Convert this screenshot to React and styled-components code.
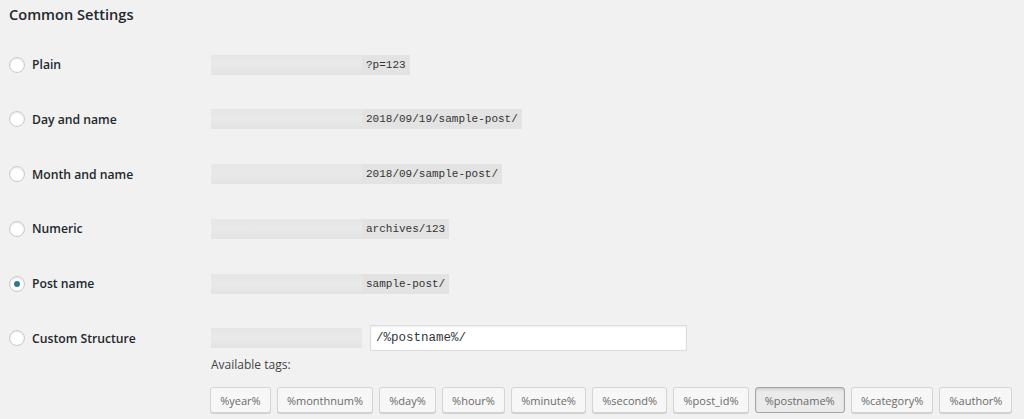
import styled, { createGlobalStyle } from 'styled-components';

const GlobalStyle = createGlobalStyle`
  html, body {
    margin: 0;
    padding: 0;
    background: #f1f1f1;
  }
  body {
    font-family: 'Open Sans', 'Liberation Sans', sans-serif;
    color: #23282d;
  }
`;

const Page = styled.div`
  width: 1024px;
  height: 419px;
  overflow: hidden;
  padding-left: 9px;
  box-sizing: border-box;
`;

const Heading = styled.h2`
  margin: 4px 0 0;
  font-size: 14.6px;
  line-height: 20px;
  font-weight: 600;
  color: #23282d;
`;

const Rows = styled.div`
  margin-top: 13.2px;
`;

const Row = styled.div`
  display: grid;
  grid-template-columns: 202px 1fr;
  padding: 14.4px 0;
`;

const LabelCell = styled.label`
  display: flex;
  align-items: center;
  gap: 7px;
  height: 26px;
  font-size: 12.2px;
  font-weight: 600;
  color: #23282d;
`;

const Radio = styled.span`
  width: 14px;
  height: 14px;
  border-radius: 50%;
  border: 1px solid #c7cacd;
  background: #fff;
  box-shadow: inset 0 1px 2px rgba(0, 0, 0, 0.1);
  display: flex;
  align-items: center;
  justify-content: center;
  flex: none;

  &::after {
    content: '';
    width: 6px;
    height: 6px;
    border-radius: 50%;
    background: ${({ checked }) => (checked ? '#2c7a92' : 'transparent')};
  }
`;

const Field = styled.div`
  display: flex;
  flex-direction: column;
`;

const Line = styled.div`
  display: flex;
  align-items: center;
  gap: 8px;
  height: 26px;
`;

const Code = styled.code`
  display: flex;
  align-items: center;
  height: 20px;
  background: #e3e3e3;
  font-family: 'Liberation Mono', 'DejaVu Sans Mono', monospace;
  font-size: 11px;
  color: #333;
  padding-right: ${({ bare }) => (bare ? '0' : '4px')};
`;

const Blur = styled.span`
  width: 151px;
  height: 20px;
  margin-right: ${({ bare }) => (bare ? '0' : '4px')};
  background: linear-gradient(180deg, #e6e6e6 0%, #e9e9e9 50%, #e3e3e3 100%);
`;

const Input = styled.input`
  width: 317px;
  height: 26px;
  box-sizing: border-box;
  border: 1px solid #ddd;
  box-shadow: inset 0 1px 2px rgba(0, 0, 0, 0.07);
  background: #fff;
  padding: 0 5px;
  font-family: 'Liberation Mono', 'DejaVu Sans Mono', monospace;
  font-size: 12.5px;
  color: #32373c;
  outline: none;
`;

const TagsLabel = styled.div`
  margin-top: 4px;
  font-size: 12px;
  line-height: 20px;
  color: #444;
`;

const Tags = styled.div`
  display: flex;
  gap: 6px;
  margin-top: 12px;
  margin-left: -1px;
`;

const Tag = styled.button`
  margin: 0;
  height: 26px;
  padding: 0 9.15px;
  border-radius: 3px;
  border: 1px solid ${({ active }) => (active ? '#a5a5a5' : '#d4d4d4')};
  background: ${({ active }) => (active ? '#ebebeb' : '#f7f7f7')};
  box-shadow: ${({ active }) =>
    active ? 'inset 0 2px 5px -3px rgba(0,0,0,0.4)' : '0 1px 0 #d0d0d0'};
  font-family: 'Open Sans', 'Liberation Sans', sans-serif;
  font-size: 11px;
  color: #6a6a6a;
  cursor: pointer;
`;

const options = [
  { label: 'Plain', sample: '?p=123' },
  { label: 'Day and name', sample: '2018/09/19/sample-post/' },
  { label: 'Month and name', sample: '2018/09/sample-post/' },
  { label: 'Numeric', sample: 'archives/123' },
  { label: 'Post name', sample: 'sample-post/', checked: true },
];

const tags = [
  '%year%',
  '%monthnum%',
  '%day%',
  '%hour%',
  '%minute%',
  '%second%',
  '%post_id%',
  '%postname%',
  '%category%',
  '%author%',
];

const App = () => {
  return (
    <>
      <GlobalStyle />
      <Page>
        <Heading>Common Settings</Heading>
        <Rows>
          {options.map((opt) => (
            <Row key={opt.label}>
              <LabelCell>
                <Radio checked={opt.checked} />
                {opt.label}
              </LabelCell>
              <Line>
                <Code>
                  <Blur />
                  {opt.sample}
                </Code>
              </Line>
            </Row>
          ))}
          <Row>
            <LabelCell>
              <Radio />
              Custom Structure
            </LabelCell>
            <Field>
              <Line>
                <Code bare>
                  <Blur bare />
                </Code>
                <Input defaultValue="/%postname%/" />
              </Line>
              <TagsLabel>Available tags:</TagsLabel>
              <Tags>
                {tags.map((t) => (
                  <Tag key={t} active={t === '%postname%'}>
                    {t}
                  </Tag>
                ))}
              </Tags>
            </Field>
          </Row>
        </Rows>
      </Page>
    </>
  );
};

export default App;
